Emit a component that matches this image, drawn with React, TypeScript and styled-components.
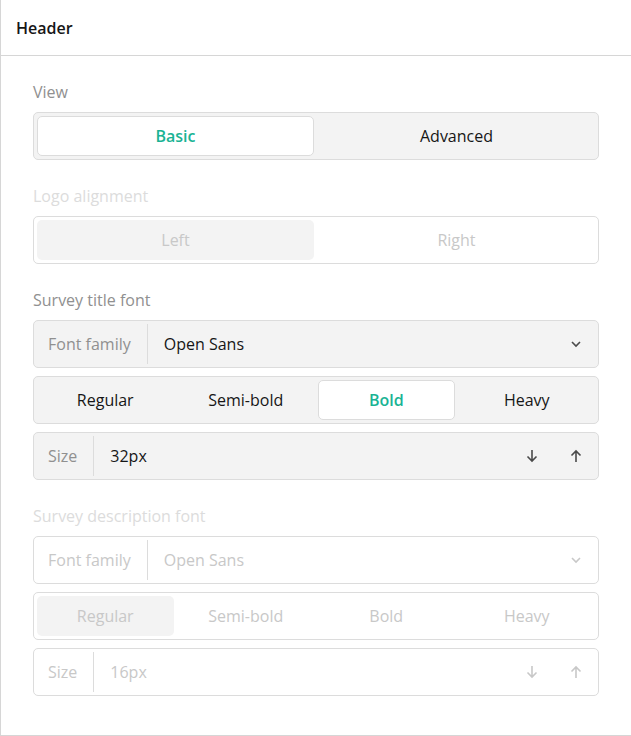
import React from "react";
import styled, { createGlobalStyle } from "styled-components";

const Global = createGlobalStyle`
  html, body { margin: 0; padding: 0; background: #fff; }
  body { font-family: "Open Sans", "Noto Sans", sans-serif; color: #161616; }
  * { box-sizing: border-box; }
`;

const Panel = styled.div`
  width: 631px;
  height: 736px;
  border-left: 1px solid #d6d6d6;
  border-bottom: 1px solid #d6d6d6;
  display: flex;
  flex-direction: column;
`;

const HeaderBar = styled.div`
  height: 56px;
  border-bottom: 1px solid #d6d6d6;
  display: flex;
  align-items: center;
  padding: 0 15px;
  font-size: 16px;
  font-weight: 600;
  color: #161616;
`;

const Body = styled.div`
  padding: 24px 32px 0 32px;
  display: flex;
  flex-direction: column;
`;

const Group = styled.div`
  display: flex;
  flex-direction: column;
  gap: 8px;
  margin-bottom: 24px;
`;

const Label = styled.div<{ $disabled?: boolean }>`
  font-size: 16px;
  line-height: 24px;
  color: ${(p) => (p.$disabled ? "#dcdcdc" : "#909090")};
`;

const Segmented = styled.div<{ $disabled?: boolean }>`
  height: 48px;
  border: 1px solid #dcdcdc;
  border-radius: 5px;
  background: ${(p) => (p.$disabled ? "#ffffff" : "#f3f3f3")};
  padding: 3px;
  display: flex;
  gap: 4px;
`;

const SegItem = styled.div<{ $selected?: boolean; $disabled?: boolean }>`
  flex: 1;
  display: flex;
  align-items: center;
  justify-content: center;
  font-size: 16px;
  border-radius: 5px;
  border: 1px solid
    ${(p) => (p.$selected && !p.$disabled ? "#dcdcdc" : "transparent")};
  background: ${(p) =>
    p.$selected ? (p.$disabled ? "#f3f3f3" : "#ffffff") : "transparent"};
  color: ${(p) =>
    p.$disabled ? "#c8c8c8" : p.$selected ? "#19b394" : "#161616"};
  font-weight: ${(p) => (p.$selected && !p.$disabled ? 600 : 400)};
`;

const Field = styled.div<{ $disabled?: boolean }>`
  height: 48px;
  border: 1px solid #dcdcdc;
  border-radius: 5px;
  background: ${(p) => (p.$disabled ? "#ffffff" : "#f3f3f3")};
  display: flex;
  align-items: center;
  font-size: 16px;
`;

const FieldLabel = styled.div<{ $disabled?: boolean }>`
  align-self: stretch;
  margin: 3px 0;
  padding: 0 16px 0 14px;
  display: flex;
  align-items: center;
  border-right: 1px solid #dcdcdc;
  color: ${(p) => (p.$disabled ? "#c8c8c8" : "#909090")};
`;

const FieldValue = styled.div<{ $disabled?: boolean }>`
  flex: 1;
  padding-left: 16px;
  color: ${(p) => (p.$disabled ? "#c8c8c8" : "#161616")};
`;

const IconBox = styled.div<{ $disabled?: boolean }>`
  width: 44px;
  height: 100%;
  display: flex;
  align-items: center;
  justify-content: center;
  color: ${(p) => (p.$disabled ? "#c8c8c8" : "#4a4a4a")};
`;

const Chevron = () => (
  <svg width="12" height="8" viewBox="0 0 12 8" fill="none">
    <path d="M2 2L6 6L10 2" stroke="currentColor" strokeWidth="1.6" />
  </svg>
);

const ArrowDown = () => (
  <svg width="12" height="14" viewBox="0 0 12 14" fill="none">
    <path d="M6 1V12M1.5 7.5L6 12L10.5 7.5" stroke="currentColor" strokeWidth="1.6" />
  </svg>
);

const ArrowUp = () => (
  <svg width="12" height="14" viewBox="0 0 12 14" fill="none">
    <path d="M6 13V2M1.5 6.5L6 2L10.5 6.5" stroke="currentColor" strokeWidth="1.6" />
  </svg>
);

const weights = ["Regular", "Semi-bold", "Bold", "Heavy"];

const FontBlock: React.FC<{
  title: string;
  size: string;
  weight: string;
  disabled?: boolean;
}> = ({ title, size, weight, disabled }) => (
  <Group>
    <Label $disabled={disabled}>{title}</Label>
    <Field $disabled={disabled}>
      <FieldLabel $disabled={disabled}>Font family</FieldLabel>
      <FieldValue $disabled={disabled}>Open Sans</FieldValue>
      <IconBox $disabled={disabled}>
        <Chevron />
      </IconBox>
    </Field>
    <Segmented $disabled={disabled}>
      {weights.map((w) => (
        <SegItem key={w} $selected={w === weight} $disabled={disabled}>
          {w}
        </SegItem>
      ))}
    </Segmented>
    <Field $disabled={disabled}>
      <FieldLabel $disabled={disabled}>Size</FieldLabel>
      <FieldValue $disabled={disabled}>{size}</FieldValue>
      <IconBox $disabled={disabled}>
        <ArrowDown />
      </IconBox>
      <IconBox $disabled={disabled}>
        <ArrowUp />
      </IconBox>
    </Field>
  </Group>
);

export default function App() {
  return (
    <>
      <Global />
      <Panel>
        <HeaderBar>Header</HeaderBar>
        <Body>
          <Group>
            <Label>View</Label>
            <Segmented>
              <SegItem $selected>Basic</SegItem>
              <SegItem>Advanced</SegItem>
            </Segmented>
          </Group>
          <Group>
            <Label $disabled>Logo alignment</Label>
            <Segmented $disabled>
              <SegItem $selected $disabled>
                Left
              </SegItem>
              <SegItem $disabled>Right</SegItem>
            </Segmented>
          </Group>
          <FontBlock title="Survey title font" size="32px" weight="Bold" />
          <FontBlock
            title="Survey description font"
            size="16px"
            weight="Regular"
            disabled
          />
        </Body>
      </Panel>
    </>
  );
}
